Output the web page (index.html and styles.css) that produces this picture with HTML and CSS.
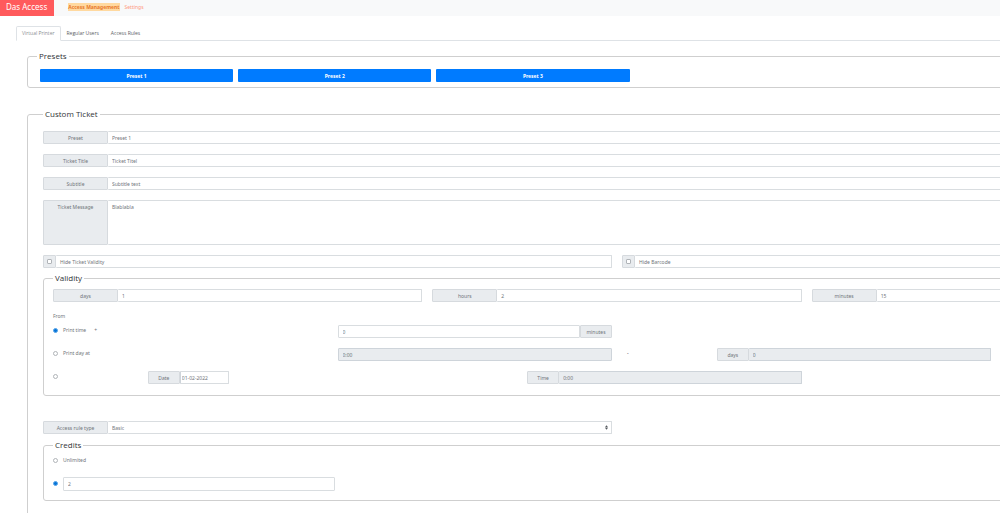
FILE: index.html
```html
<!DOCTYPE html>
<html lang="en">
<head>
<meta charset="utf-8">
<title>Das Access</title>
<link rel="stylesheet" href="styles.css">
</head>
<body>
<div class="page">
  <header class="navbar">
    <a class="brand" href="#">Das Access</a>
    <nav class="nav-links">
      <a class="nav-link active" href="#">Access Management</a>
      <a class="nav-link" href="#">Settings</a>
    </nav>
  </header>
  <main class="main">
    <nav class="tabs">
      <a class="tab active" href="#">Virtual Printer</a>
      <a class="tab" href="#">Regular Users</a>
      <a class="tab" href="#">Access Rules</a>
    </nav>

    <fieldset class="panel presets">
      <legend>Presets</legend>
      <div class="preset-grid">
        <button class="preset" type="button">Preset 1</button>
        <button class="preset" type="button">Preset 2</button>
        <button class="preset" type="button">Preset 3</button>
      </div>
    </fieldset>

    <fieldset class="panel ticket">
      <legend>Custom Ticket</legend>
      <div class="stack">
        <div class="group"><label class="addon wide" for="preset">Preset</label><input class="control" id="preset" type="text" value="Preset 1"></div>
        <div class="group"><label class="addon wide" for="title">Ticket Title</label><input class="control" id="title" type="text" value="Ticket Titel"></div>
        <div class="group"><label class="addon wide" for="subtitle">Subtitle</label><input class="control" id="subtitle" type="text" value="Subtitle text"></div>
        <div class="group message"><label class="addon wide" for="message">Ticket Message</label><textarea class="control" id="message">Blablabla</textarea></div>
        <div class="halves">
          <div class="group"><span class="addon tick"><input class="check" id="hide-validity" type="checkbox"></span><label class="control" for="hide-validity">Hide Ticket Validity</label></div>
          <div class="group"><span class="addon tick"><input class="check" id="hide-barcode" type="checkbox"></span><label class="control" for="hide-barcode">Hide Barcode</label></div>
        </div>
      </div>

      <fieldset class="panel inner validity">
        <legend>Validity</legend>
        <div class="columns">
          <div class="group span-4"><label class="addon wide" for="days">days</label><input class="control" id="days" type="text" value="1"></div>
          <div class="group span-4"><label class="addon wide" for="hours">hours</label><input class="control" id="hours" type="text" value="2"></div>
          <div class="group span-4"><label class="addon wide" for="minutes">minutes</label><input class="control" id="minutes" type="text" value="15"></div>
        </div>
        <p class="from">From</p>
        <div class="stack">
          <div class="columns">
            <div class="option span-3"><input class="radio" id="print-time" name="from" type="radio" checked><label for="print-time">Print time</label><span class="plus">+</span></div>
            <div class="group span-3"><input class="control" id="offset" type="text" value="0"><label class="addon narrow" for="offset">minutes</label></div>
          </div>
          <div class="columns">
            <div class="option span-3"><input class="radio" id="print-day" name="from" type="radio"><label for="print-day">Print day at</label></div>
            <div class="group span-3"><input class="control" type="text" value="0:00" aria-label="Time of print day" disabled></div>
            <div class="option joiner">-</div>
            <div class="group span-3"><label class="addon narrow" for="day-offset">days</label><input class="control" id="day-offset" type="text" value="0" disabled></div>
          </div>
          <div class="columns">
            <div class="option"><input class="radio" name="from" type="radio" aria-label="Fixed date and time"></div>
            <div class="group date span-4"><label class="addon narrow" for="date">Date</label><input class="control" id="date" type="text" value="01-02-2022"></div>
            <div class="group span-3"><label class="addon narrow" for="time">Time</label><input class="control" id="time" type="text" value="0:00" disabled></div>
          </div>
        </div>
      </fieldset>

      <div class="halves rule">
        <div class="group">
          <label class="addon wide" for="rule">Access rule type</label>
          <select class="control" id="rule"><option>Basic</option></select>
          <svg class="caret" viewBox="0 0 4 6" aria-hidden="true"><path d="M0 2.6 2 0 4 2.6ZM0 3.4 2 6 4 3.4Z"/></svg>
        </div>
      </div>

      <fieldset class="panel inner credits">
        <legend>Credits</legend>
        <div class="option"><input class="radio" id="unlimited" name="credits" type="radio"><label for="unlimited">Unlimited</label></div>
        <div class="option amount"><input class="radio" name="credits" type="radio" aria-label="Limited" checked><input class="control" type="text" value="2" aria-label="Number of credits"></div>
      </fieldset>
    </fieldset>
  </main>
</div>
</body>
</html>
```
FILE: styles.css
```css
* { box-sizing: border-box; }

body {
  margin: 0;
  overflow: hidden;
  background: #fff;
  color: #70757a;
  font: 5px/8px "Noto Sans", "Open Sans", sans-serif;
}

a { color: inherit; text-decoration: none; }
input, select, textarea, button { font: inherit; color: inherit; margin: 0; }

/* The form is wider than the window and runs off its right edge. */
.page { width: 124vw; }

.navbar {
  display: flex;
  align-items: stretch;
  gap: 14px;
  height: 16px;
  background: #f8f9fa;
}
.brand {
  padding: 0 7px 0 6px;
  background: #ff5a5c;
  color: #fff;
  font-size: 8px;
  line-height: 14px;
}
.nav-links { display: flex; align-items: center; gap: 5px; padding-bottom: 2px; }
.nav-link { color: #ff9a80; }
.nav-link.active { background: #ffd9a0; color: #e8792c; font-weight: bold; }

.main { padding: 10px 0 0 16px; }

.tabs { display: flex; height: 15px; border-bottom: 1px solid #dee2e6; }
.tab {
  padding: 2px 5px;
  border: 1px solid transparent;
  color: #5c6064;
  font-family: "Open Sans", sans-serif;
}
.tab.active {
  margin-bottom: -1px;
  border-color: #dee2e6;
  border-bottom-color: #fff;
  border-radius: 2px 2px 0 0;
  background: #fff;
  color: #8a8e92;
}

.panel {
  min-width: 0;
  margin: 0;
  border: 1px solid #cfcfcf;
  border-radius: 3px;
}
.panel legend {
  padding: 0 2px;
  color: #303336;
  font-family: "Open Sans", sans-serif;
  font-size: 8px;
  line-height: 12px;
}
.presets { margin: 9px 6px 0 11px; padding: 7px 9px 5px; }
.preset-grid {
  display: grid;
  grid-template-columns: repeat(6, 1fr);
  gap: 5px;
  padding-left: 3px;
}
.preset {
  height: 13px;
  padding: 0;
  border: 0;
  border-radius: 1px;
  background: #007bff;
  color: #fff;
  font-weight: bold;
}

.ticket { margin: 20px 33px 0 11px; padding: 11px 15px 30px; }
.stack { display: grid; gap: 10px; }
.halves { display: grid; grid-template-columns: 1fr 1fr; gap: 10px; }
.columns { display: grid; grid-template-columns: repeat(12, 1fr); gap: 10px; }
.span-3 { grid-column: span 3; }
.span-4 { grid-column: span 4; }

.group { position: relative; display: flex; min-width: 0; height: 13px; }
.group.message { height: 45px; }
.addon {
  flex: none;
  padding: 2px 0;
  border: 1px solid #d6dade;
  border-radius: 1px;
  background: #e9ecef;
  text-align: center;
}
.wide { width: 65px; }
.narrow { width: 32px; }
.tick { display: flex; align-items: center; justify-content: center; width: 13px; }
.control {
  flex: 1;
  min-width: 0;
  padding: 2px 4px;
  border: 1px solid #d9dde0;
  border-radius: 1px;
  background: #fff;
  outline: 0;
}
.addon + .control { border-left: 0; }
.control:disabled { border-color: #ced4da; background: #e9ecef; }
textarea.control { resize: none; }
select.control { appearance: none; }
.caret {
  position: absolute;
  top: 4px;
  right: 4px;
  width: 3px;
  height: 5px;
  fill: #54595e;
}
.date .control { flex: 0 0 49px; padding: 2px 1px; border-left: 1px solid #ced4da; }

.check, .radio {
  appearance: none;
  flex: none;
  width: 5px;
  height: 5px;
  border: 1px solid #b0b4b8;
  background: #fff;
}
.check { border-radius: 1px; }
.radio { border-radius: 50%; }
.radio:checked { border-color: #58a5e8; background: #0875d8; }

.inner { margin-top: 4px; padding: 5px 9px 11px; }
.from { margin: 10px 0 5px; }
.option { display: flex; align-items: center; gap: 5px; height: 10px; }
.plus { margin-left: 3px; }
.joiner { padding-left: 5px; color: #303336; }

.rule { margin-top: 25px; }
.credits { margin-top: 5px; padding: 4px 9px 10px; }
.amount { width: 25%; height: 13px; margin-top: 12px; }
```
